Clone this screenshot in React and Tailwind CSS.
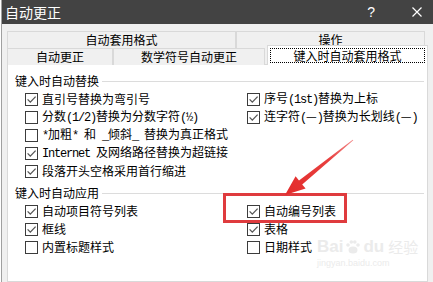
import React from 'react';

const Latin = ({ children }) => (
  <span className="font-[family-name:Liberation_Mono,monospace] tracking-[-1.2px]">{children}</span>
);

// wrap half-width runs so they take 6px each, like the SimSun look of the dialog
const mix = (text) =>
  text.split(/([\x20-\x7E½]+)/).map((part, i) =>
    /^[\x20-\x7E½]+$/.test(part) ? <Latin key={i}>{part}</Latin> : part
  );

const CheckBox = ({ checked }) => (
  <span className="w-[13px] h-[13px] border border-[#3c3c3c] bg-white flex items-center justify-center shrink-0">
    {checked && (
      <svg width="11" height="11" viewBox="0 0 11 11">
        <path d="M1.6 5.4 L4.3 8.1 L9.6 2.6" stroke="#555" strokeWidth="1.3" fill="none" />
      </svg>
    )}
  </span>
);

const Item = ({ label, checked }) => (
  <div className="flex items-center h-[18px] gap-[4px] whitespace-nowrap">
    <CheckBox checked={checked} />
    <span className="text-[12px] leading-[18px] text-black">{mix(label)}</span>
  </div>
);

const GroupLabel = ({ children }) => (
  <div className="flex items-center h-[18px] pl-[7px] pr-[3px]">
    <span className="text-[12px] leading-[18px] text-black whitespace-nowrap">{children}</span>
    <div className="flex-1 h-px bg-[#dcdcdc] ml-[3px]" />
  </div>
);

const Tab = ({ label, width }) => (
  <div
    className="h-[17px] flex items-center justify-center border-t border-l border-r border-[#d9d9d9] bg-[#f0f0f0] text-[12px] text-black"
    style={{ width }}
  >
    {label}
  </div>
);

const replaceLeft = [
  { label: '直引号替换为弯引号', checked: true },
  { label: '分数(1/2)替换为分数字符(½)', checked: false },
  { label: '*加粗* 和 _倾斜_ 替换为真正格式', checked: false },
  { label: 'Internet 及网络路径替换为超链接', checked: true },
  { label: '段落开头空格采用首行缩进', checked: true },
];

const replaceRight = [
  { label: '序号(1st)替换为上标', checked: true },
  { label: '连字符(—)替换为长划线(—)', checked: true },
];

const applyLeft = [
  { label: '自动项目符号列表', checked: true },
  { label: '框线', checked: true },
  { label: '内置标题样式', checked: false },
];

const applyRight = [
  { label: '自动编号列表', checked: true },
  { label: '表格', checked: true },
  { label: '日期样式', checked: false },
];

export default function App() {
  return (
    <div className="w-[433px] h-[282px] relative overflow-hidden bg-white flex font-[family-name:'Noto_Sans_CJK_SC',sans-serif]">
      <div className="w-[3px] bg-white" />
      <div className="flex-1 flex flex-col border-l border-[#a0a0a0]">
        {/* title bar */}
        <div className="h-[24px] bg-[#434343] flex items-center pl-[3px] pr-[11px] text-white">
          <span className="text-[14px] leading-none">自动更正</span>
          <span className="ml-auto text-[14px] leading-none font-[family-name:Liberation_Sans,sans-serif]">?</span>
          <svg className="ml-[37px]" width="10" height="10" viewBox="0 0 10 10">
            <path d="M0.5 0.5 L9.5 9.5 M9.5 0.5 L0.5 9.5" stroke="#fff" strokeWidth="1.2" />
          </svg>
        </div>

        {/* body */}
        <div className="flex-1 bg-[#f0f0f0] px-[5px] pt-[7px] flex flex-col">
          <div className="flex">
            <Tab label="自动套用格式" width={229} />
            <Tab label="操作" width={189} />
          </div>
          <div className="flex items-end h-[17px] relative z-10 -mb-px">
            <Tab label="自动更正" width={106} />
            <Tab label="数学符号自动更正" width={152} />
            <div className="ml-[2px] w-[161px] h-[20px] bg-white border-t border-l border-r border-[#d9d9d9] p-[2px]">
              <div className="h-full border border-dotted border-black flex items-center justify-center text-[12px] text-black">
                键入时自动套用格式
              </div>
            </div>
          </div>

          {/* panel */}
          <div className="flex-1 bg-white border border-[#d9d9d9] pt-[7px]">
            <GroupLabel>键入时自动替换</GroupLabel>
            <div className="grid grid-cols-[222px_1fr] pl-[17px]">
              <div className="flex flex-col">
                {replaceLeft.map((it) => (
                  <Item key={it.label} {...it} />
                ))}
              </div>
              <div className="flex flex-col">
                {replaceRight.map((it) => (
                  <Item key={it.label} {...it} />
                ))}
              </div>
            </div>

            <div className="mt-[4px]">
              <GroupLabel>键入时自动应用</GroupLabel>
            </div>
            <div className="grid grid-cols-[222px_1fr] pl-[17px]">
              <div className="flex flex-col">
                {applyLeft.map((it) => (
                  <Item key={it.label} {...it} />
                ))}
              </div>
              <div className="flex flex-col">
                {applyRight.map((it) => (
                  <Item key={it.label} {...it} />
                ))}
              </div>
            </div>
          </div>
        </div>
      </div>

      {/* watermark */}
      <div className="absolute left-[317px] top-[238px] pointer-events-none flex flex-col items-start text-[#ebebeb]">
        <div className="flex items-center gap-[2px] leading-none">
          <span className="text-[17px] font-bold font-[family-name:Liberation_Sans,sans-serif]">Bai</span>
          <svg width="16" height="16" viewBox="0 0 16 16">
            <ellipse cx="8" cy="11" rx="4.5" ry="3.5" fill="#ebebeb" />
            <circle cx="3" cy="6" r="1.8" fill="#ebebeb" />
            <circle cx="6.3" cy="3" r="1.8" fill="#ebebeb" />
            <circle cx="9.8" cy="3" r="1.8" fill="#ebebeb" />
            <circle cx="13" cy="6" r="1.8" fill="#ebebeb" />
          </svg>
          <span className="text-[17px] font-bold font-[family-name:Liberation_Sans,sans-serif]">du</span>
          <span className="text-[15px] ml-[2px]">经验</span>
        </div>
        <span className="text-[9px] leading-none mt-[4px] font-[family-name:Liberation_Sans,sans-serif]">jingyan.baidu.com</span>
      </div>

      {/* highlight box */}
      <div className="absolute left-[223px] top-[193px] w-[124px] h-[30px] border-[3px] border-[#df3b3e] pointer-events-none" />

      {/* arrow */}
      <svg className="absolute left-0 top-0 pointer-events-none" width="433" height="282" viewBox="0 0 433 282">
        <defs>
          <linearGradient id="arr" x1="353" y1="140" x2="285" y2="195" gradientUnits="userSpaceOnUse">
            <stop offset="0" stopColor="#f28a8a" />
            <stop offset="0.35" stopColor="#e8403f" />
            <stop offset="1" stopColor="#e32b2b" />
          </linearGradient>
        </defs>
        <polygon
          points="353.3,140.3 352.7,139.7 299,180.4 295.6,176.2 285,195 305.6,188.6 302.2,184.4"
          fill="url(#arr)"
        />
      </svg>
    </div>
  );
}
